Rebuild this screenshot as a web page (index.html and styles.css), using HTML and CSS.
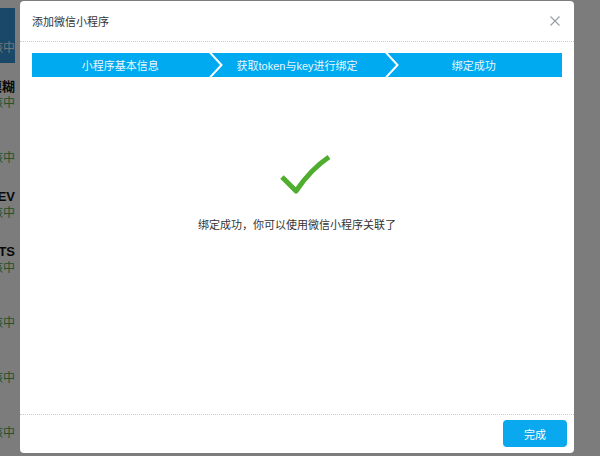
FILE: index.html
```html
<!DOCTYPE html>
<html lang="zh-CN">
<head>
<meta charset="utf-8">
<title>添加微信小程序</title>
<link rel="stylesheet" href="styles.css">
</head>
<body>
<div class="page">
  <div class="list">
    <div class="row active"><span class="name">&nbsp;</span><span class="status">审核中</span></div>
    <div class="row"><span class="name">测试模糊</span><span class="status">审核中</span></div>
    <div class="row"><span class="name">&nbsp;</span><span class="status">审核中</span></div>
    <div class="row"><span class="name">DEV</span><span class="status">审核中</span></div>
    <div class="row"><span class="name">TESTS</span><span class="status">审核中</span></div>
    <div class="row"><span class="name">&nbsp;</span><span class="status">审核中</span></div>
    <div class="row"><span class="name">&nbsp;</span><span class="status">审核中</span></div>
    <div class="row"><span class="name">&nbsp;</span><span class="status">审核中</span></div>
  </div>
</div>
<div class="mask"></div>
<div class="modal">
  <div class="modal-header">
    <span class="title">添加微信小程序</span>
    <svg class="close" width="10" height="10" viewBox="0 0 10 10"><path d="M0.5 0.5 L9.5 9.5 M9.5 0.5 L0.5 9.5" stroke="#9aa0a6" stroke-width="1.2" fill="none"/></svg>
  </div>
  <div class="modal-body">
    <div class="steps">
      <div class="step">小程序基本信息<svg class="chev" width="14" height="24" viewBox="0 0 14 24"><path d="M0.5 -1 L12.5 12 L0.5 25" stroke="#ffffff" stroke-width="2" fill="none"/></svg></div>
      <div class="step">获取token与key进行绑定<svg class="chev" width="14" height="24" viewBox="0 0 14 24"><path d="M0.5 -1 L12.5 12 L0.5 25" stroke="#ffffff" stroke-width="2" fill="none"/></svg></div>
      <div class="step">绑定成功</div>
    </div>
    <div class="result">
      <svg class="check" width="60" height="50" viewBox="0 0 60 50"><path d="M11 25 L25 39 Q40 17 58 5" stroke="#4fae2e" stroke-width="5" fill="none" stroke-linejoin="round"/></svg>
      <p class="msg">绑定成功，你可以使用微信小程序关联了</p>
    </div>
  </div>
  <div class="modal-footer">
    <button class="btn">完成</button>
  </div>
</div>
</body>
</html>
```
FILE: styles.css
```css
html, body {
  margin: 0;
  padding: 0;
  width: 600px;
  height: 456px;
  overflow: hidden;
  background: #ffffff;
  font-family: "Liberation Sans", "Noto Sans CJK SC", sans-serif;
}

.page {
  position: relative;
  z-index: 0;
  width: 600px;
  height: 456px;
}

.list {
  display: flex;
  flex-direction: column;
  padding-top: 8px;
  width: 15px;
}

.row {
  height: 55px;
  display: flex;
  flex-direction: column;
  align-items: flex-end;
  justify-content: flex-start;
  padding-top: 16px;
  box-sizing: border-box;
}

.row.active {
  background: #3795d6;
}

.name {
  display: flex;
  justify-content: flex-end;
  white-space: nowrap;
  font-size: 13px;
  font-weight: bold;
  line-height: 16px;
  color: #111;
}

.status {
  display: flex;
  justify-content: flex-end;
  white-space: nowrap;
  font-size: 12px;
  line-height: 16px;
  color: #4fa84f;
}

.row.active .status {
  color: #e6f0f8;
}

.mask {
  position: absolute;
  z-index: 1;
  left: 0;
  top: 0;
  width: 600px;
  height: 456px;
  background: rgba(0, 0, 0, 0.515);
}

.modal {
  position: absolute;
  z-index: 2;
  left: 20px;
  top: 1px;
  width: 554px;
  height: 452px;
  background: #ffffff;
  border-radius: 4px;
  display: flex;
  flex-direction: column;
}

.modal-header {
  height: 40px;
  flex: none;
  display: flex;
  align-items: center;
  justify-content: space-between;
  padding: 0 14px 0 12px;
  border-bottom: 1px dotted #c3ccd8;
}

.title {
  font-size: 11px;
  color: #333;
}

.close {
  display: block;
}

.modal-body {
  flex: 1;
  padding: 11px 12px 0;
}

.steps {
  height: 24px;
  display: flex;
  background: #00aaf0;
}

.step {
  flex: 1;
  position: relative;
  display: flex;
  align-items: center;
  justify-content: center;
  font-size: 11px;
  color: #e9f7ff;
}

.chev {
  position: absolute;
  left: 100%;
  top: 0;
}

.result {
  display: flex;
  flex-direction: column;
  align-items: center;
  padding-top: 75px;
}

.check {
  display: block;
  margin-left: 8px;
}

.msg {
  margin: 15px 0 0;
  font-size: 11px;
  line-height: 16px;
  color: #333;
}

.modal-footer {
  flex: none;
  display: flex;
  justify-content: flex-end;
  padding: 5px 7px 6px;
  border-top: 1px dotted #c3ccd8;
}

.btn {
  width: 64px;
  height: 27px;
  border: none;
  border-radius: 4px;
  background: #0aa8ee;
  color: #ffffff;
  font-family: "Liberation Sans", "Noto Sans CJK SC", sans-serif;
  font-size: 11px;
  padding: 0;
}
```
